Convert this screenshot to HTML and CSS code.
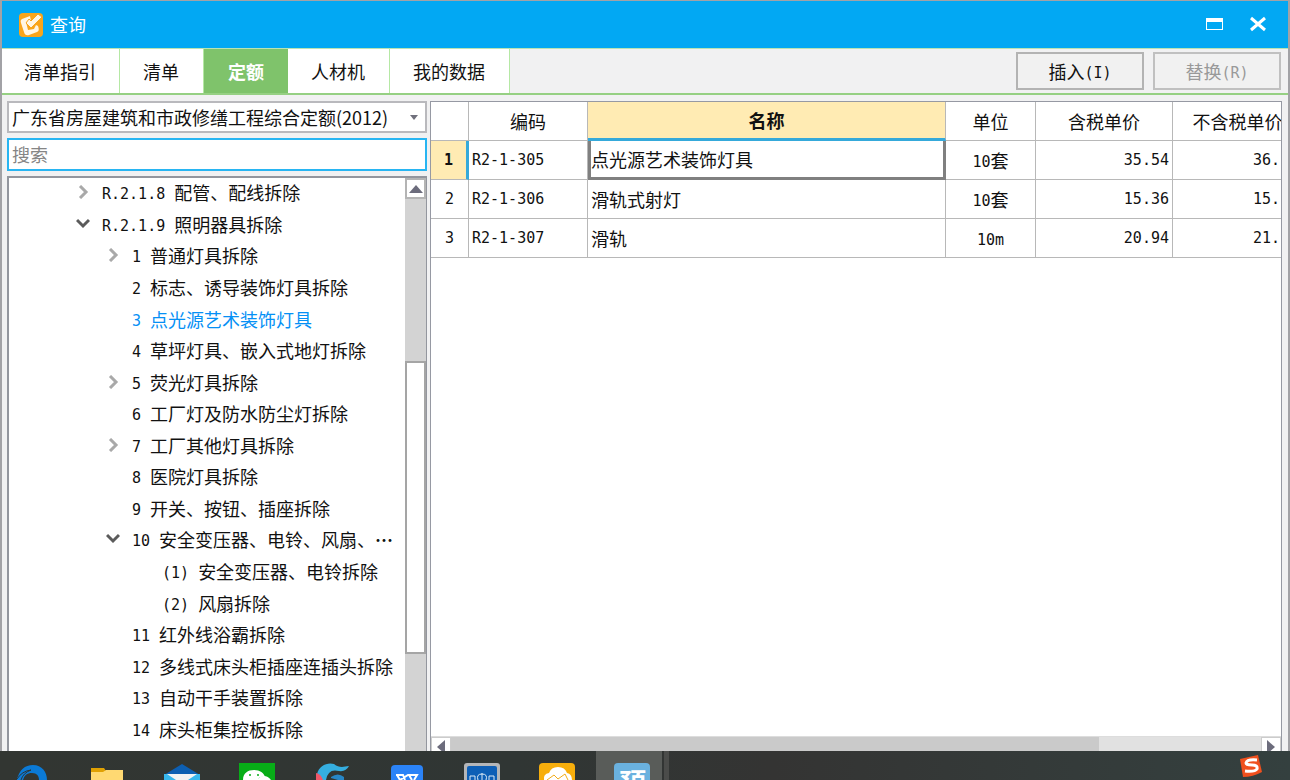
FILE: index.html
```html
<!DOCTYPE html>
<html lang="zh-CN">
<head>
<meta charset="utf-8">
<title>查询</title>
<link rel="stylesheet" href="styles.css">
</head>
<body>
<main class="window">
  <header class="titlebar">
    <svg class="app-icon" viewBox="0 0 24 24" aria-hidden="true">
      <rect width="24" height="24" rx="4" fill="#f9a51b"/>
      <path d="M11 3L3 6Q1 7 2 10L5 19Q6 23 10 22L18 19Q21 18 19 13L17 12L15 16L9 17L7 9L12 8Z" fill="#fff6e4"/>
      <path d="M7 10L12 15L23 4L19 1L12 8L10 6Z" fill="#fff6e4" stroke="#f9a51b" stroke-width="1"/>
    </svg>
    <h1 class="title">查询</h1>
    <button class="win-btn" type="button" aria-label="最大化"><svg width="18" height="18" viewBox="0 0 18 18"><path d="M1 2h17v12H1zM2 6v7h15V6z" fill="#fff" fill-rule="evenodd"/></svg></button>
    <button class="win-btn" type="button" aria-label="关闭"><svg width="18" height="18" viewBox="0 0 18 18"><path d="M2 2L16 14M16 2L2 14" stroke="#fff" stroke-width="3"/></svg></button>
  </header>

  <div class="toolbar">
    <nav class="tabs">
      <button class="tab" type="button">清单指引</button>
      <button class="tab" type="button">清单</button>
      <button class="tab tab-active" type="button">定额</button>
      <button class="tab" type="button">人材机</button>
      <button class="tab" type="button">我的数据</button>
    </nav>
    <div class="actions">
      <button class="action" type="button"><span>插入<span class="mono">(I)</span></span></button>
      <button class="action" type="button" disabled><span>替换<span class="mono">(R)</span></span></button>
    </div>
  </div>

  <div class="content">
    <section class="side">
      <select class="library" aria-label="定额库"><option>广东省房屋建筑和市政修缮工程综合定额(2012)</option></select>
      <input class="search" type="text" placeholder="搜索" aria-label="搜索">
      <div class="tree-panel">
        <ul class="tree">
          <li class="node level-1"><svg class="chevron" viewBox="0 0 14 14"><path d="M4 1L10 7L4 13"/></svg><span><span class="mono">R.2.1.8 </span>配管、配线拆除</span></li>
          <li class="node level-1"><svg class="chevron open" viewBox="0 0 14 14"><path d="M1 3L7 9L13 3"/></svg><span><span class="mono">R.2.1.9 </span>照明器具拆除</span></li>
          <li class="node level-2"><svg class="chevron" viewBox="0 0 14 14"><path d="M4 1L10 7L4 13"/></svg><span><span class="mono">1 </span>普通灯具拆除</span></li>
          <li class="node level-2 leaf"><span><span class="mono">2 </span>标志、诱导装饰灯具拆除</span></li>
          <li class="node level-2 leaf current"><span><span class="mono">3 </span>点光源艺术装饰灯具</span></li>
          <li class="node level-2 leaf"><span><span class="mono">4 </span>草坪灯具、嵌入式地灯拆除</span></li>
          <li class="node level-2"><svg class="chevron" viewBox="0 0 14 14"><path d="M4 1L10 7L4 13"/></svg><span><span class="mono">5 </span>荧光灯具拆除</span></li>
          <li class="node level-2 leaf"><span><span class="mono">6 </span>工厂灯及防水防尘灯拆除</span></li>
          <li class="node level-2"><svg class="chevron" viewBox="0 0 14 14"><path d="M4 1L10 7L4 13"/></svg><span><span class="mono">7 </span>工厂其他灯具拆除</span></li>
          <li class="node level-2 leaf"><span><span class="mono">8 </span>医院灯具拆除</span></li>
          <li class="node level-2 leaf"><span><span class="mono">9 </span>开关、按钮、插座拆除</span></li>
          <li class="node level-2"><svg class="chevron open" viewBox="0 0 14 14"><path d="M1 3L7 9L13 3"/></svg><span><span class="mono">10 </span>安全变压器、电铃、风扇、<b>⋯</b></span></li>
          <li class="node level-3 leaf"><span><span class="mono">(1) </span>安全变压器、电铃拆除</span></li>
          <li class="node level-3 leaf"><span><span class="mono">(2) </span>风扇拆除</span></li>
          <li class="node level-2 leaf"><span><span class="mono">11 </span>红外线浴霸拆除</span></li>
          <li class="node level-2 leaf"><span><span class="mono">12 </span>多线式床头柜插座连插头拆除</span></li>
          <li class="node level-2 leaf"><span><span class="mono">13 </span>自动干手装置拆除</span></li>
          <li class="node level-2 leaf"><span><span class="mono">14 </span>床头柜集控板拆除</span></li>
        </ul>
        <div class="vscroll">
          <button class="vscroll-up" type="button" aria-label="向上滚动"><svg width="14" height="8" viewBox="0 0 14 8"><path d="M0 8L7 0L14 8z" fill="#6c6c7c"/></svg></button>
          <div class="vscroll-track"><div class="vscroll-thumb"></div></div>
        </div>
      </div>
    </section>

    <section class="grid-panel">
      <div class="grid-view">
        <table class="grid">
          <colgroup><col class="c-index"><col class="c-code"><col><col class="c-unit"><col class="c-price"><col class="c-net"></colgroup>
          <thead>
            <tr><th></th><th>编码</th><th class="head-active">名称</th><th>单位</th><th>含税单价</th><th>不含税单价</th></tr>
          </thead>
          <tbody>
            <tr><td class="index index-active">1</td><td class="code">R2-1-305</td><td class="cell-active">点光源艺术装饰灯具</td><td class="unit"><span class="mono">10</span>套</td><td class="num">35.54</td><td class="num net">36.</td></tr>
            <tr><td class="index">2</td><td class="code">R2-1-306</td><td>滑轨式射灯</td><td class="unit"><span class="mono">10</span>套</td><td class="num">15.36</td><td class="num net">15.</td></tr>
            <tr><td class="index">3</td><td class="code">R2-1-307</td><td>滑轨</td><td class="unit"><span class="mono">10m</span></td><td class="num">20.94</td><td class="num net">21.</td></tr>
          </tbody>
        </table>
      </div>
      <div class="hscroll">
        <button class="hscroll-btn" type="button" aria-label="向左滚动"><svg width="8" height="14" viewBox="0 0 8 14"><path d="M8 0L0 7L8 14z" fill="#6c6c7c"/></svg></button>
        <div class="hscroll-track"><div class="hscroll-thumb"></div></div>
        <button class="hscroll-btn" type="button" aria-label="向右滚动"><svg width="8" height="14" viewBox="0 0 8 14"><path d="M0 0L8 7L0 14z" fill="#6c6c7c"/></svg></button>
      </div>
    </section>
  </div>
</main>

<footer class="taskbar">
  <div class="task"><svg viewBox="0 0 36 17"><path d="M3 17C5 7 11 2 19 2C28 2 33 9 33 17H25C25 13 23 10 18 10C13 10 10 12 8 17Z" fill="#0b7ad6"/><path d="M3 15Q11 7 18 8Q11 10 9 17H3Z" fill="#0b7ad6"/><path d="M3 16Q8 8 17 7Q9 10 7 17" fill="none" stroke="#2f3532" stroke-width="1"/></svg></div>
  <div class="task"><svg viewBox="0 0 36 17"><path d="M2 5h13l2 3-2 2H2z" fill="#e0a103"/><path d="M2 9h12l3-2h17v10H2z" fill="#ffd972"/></svg></div>
  <div class="task"><svg viewBox="0 0 36 17"><path d="M0 12L18 1L36 12z" fill="#0d5fb2"/><path d="M0 11h36v6H0z" fill="#37b7ed"/><path d="M3 11h30l-9 6H12z" fill="#f3f3f3"/></svg></div>
  <div class="task"><svg viewBox="0 0 36 17"><path d="M0 0h36v17H0z" fill="#07ad17"/><path d="M4 17C4 10 9 7 15 7S25 10 26 14Q20 13 19 17z" fill="#fff"/><path d="M18 17q3-4 7-4t7 4z" fill="#fff"/><circle cx="11" cy="12" r="1" fill="#07ad17"/><circle cx="19" cy="12" r="1" fill="#07ad17"/></svg></div>
  <div class="task"><svg viewBox="0 0 36 17"><path d="M3 11C5 3 13-1 20 1C25 5 29 4 35 3Q32 9 25 8Q14 5 12 17H8Z" fill="#35aee0"/><path d="M2 10Q7 11 9 17H2Z" fill="#ef5768"/><path d="M17 14Q24 9 30 14V17H24L17 15Z" fill="#2786c6"/></svg></div>
  <div class="task"><svg viewBox="0 0 36 17"><path d="M2 17V6q0-4 4-4h24q4 0 4 4v11z" fill="#2b83f7"/><path d="M7 12h7l2 5M8 12l3 5 8-5h9l-3 5M20 12l3 5" fill="none" stroke="#fff" stroke-width="2"/></svg></div>
  <div class="task"><svg viewBox="0 0 36 17"><path d="M0 17V3q0-3 3-3h30q3 0 3 3v14z" fill="#b4b6b8"/><path d="M3 17V5q0-2 2-2h26q2 0 2 2v12z" fill="#0d5fb6"/><path d="M6 17v-4h5v4M14 17q-2-6 4-6t4 6M18 10v7M25 17v-4h5v4" fill="none" stroke="#dceaf5" stroke-width="1"/></svg></div>
  <div class="task"><svg viewBox="0 0 36 17"><path d="M0 17V4q0-4 4-4h28q4 0 4 4v13z" fill="#f7ae0c"/><path d="M5 17q-1-6 5-7q2-6 9-6t9 6q5 1 5 7z" fill="#fff"/><path d="M8 17l7-5 4 4 7-5 3 6" fill="none" stroke="#f2ac18" stroke-width="1"/></svg></div>
  <div class="task task-active"><svg viewBox="0 0 36 17"><path d="M0 17V4q0-4 4-4h28q4 0 4 4v13z" fill="#6ab1df"/><text class="glyph" x="5" y="30">预</text></svg></div>
  <div class="task-stack"></div>
  <svg class="ime" viewBox="0 0 24 24" aria-label="S"><path d="M1 5L19 1L23 18Q14 23 4 23Z" fill="#f0501e"/><path d="M18 6Q8 5 7 9Q7 11 13 11Q19 11 18 15Q16 18 6 17" fill="none" stroke="#fff" stroke-width="3"/></svg>
</footer>
</body>
</html>
```
FILE: styles.css
```css
* { box-sizing: border-box; }

body {
  display: flex;
  flex-direction: column;
  height: 100vh;
  margin: 0;
  overflow: hidden;
  color: #111;
  font: 18px/24px "Noto Sans CJK SC", sans-serif;
}

button, input, select { font: inherit; color: inherit; }
button { display: flex; align-items: center; justify-content: center; padding: 0; border: 0; border-radius: 0; }
.mono { font-family: "DejaVu Sans Mono", monospace; font-size: 15px; line-height: 18px; vertical-align: 1px; white-space: pre; }

.window {
  display: flex;
  flex: 1;
  flex-direction: column;
  min-height: 0;
  border: 2px solid #a2a2a6;
  border-top-width: 1px;
  border-bottom: 0;
  background: #f1f1f2;
}

/* Title bar */
.titlebar { display: flex; align-items: center; height: 47px; padding: 0 13px 0 17px; background: #02a8f3; color: #fff; }
.app-icon { width: 24px; height: 24px; margin-right: 7px; }
.title { flex: 1; margin: 0; padding-bottom: 2px; font-size: 18px; font-weight: 400; }
.win-btn { width: 34px; height: 34px; margin-left: 10px; background: none; }

/* Tabs and actions */
.toolbar { display: flex; justify-content: space-between; height: 47px; border-top: 1px solid #b9e3b4; border-bottom: 2px solid #96d083; }
.tabs { display: flex; }
.tab { padding: 0 24px 0 23px; border-right: 1px solid #b5e8a4; background: #fff; }
.tab:first-child { padding: 0 23px 0 22px; }
.tab-active { padding: 0 24px; border-right: 0; background: #7fc36b; color: #fff; font-weight: 700; }
.actions { display: flex; gap: 9px; padding: 3px 7px; }
.action { width: 128px; height: 38px; border: 2px solid #b3b3b3; background: #f1f1f1; }
.action:disabled { border-color: #c0c0c0; color: #999; }

/* Two panes */
.content { display: flex; flex: 1; gap: 3px; min-height: 0; padding: 6px 6px 0 5px; }
.side { display: flex; flex-direction: column; flex: 0 0 420px; gap: 5px; min-height: 0; }
.library {
  height: 32px;
  padding: 0 24px 0 3px;
  border: 2px solid #b9b9bd;
  border-radius: 0;
  appearance: none;
  background: #fff url("data:image/svg+xml,%3Csvg xmlns='http://www.w3.org/2000/svg' width='8' height='5'%3E%3Cpath d='M0 0h8L4 5z' fill='%2370707c'/%3E%3C/svg%3E") no-repeat right 7px center;
}
.search { height: 33px; padding: 0 3px 2px; border: 2px solid #28b5f2; border-radius: 0; background: #fff; }
.search::placeholder { color: #858585; opacity: 1; }

/* Tree */
.tree-panel { display: flex; flex: 1; min-height: 0; border: 2px solid #93969e; border-right-width: 1px; border-bottom: 0; background: #fff; }
.tree { display: flex; flex: 1; flex-direction: column; margin: 0; padding: 0 0 5px; list-style: none; white-space: nowrap; }
.node { display: flex; flex: 1; align-items: center; gap: 12px; padding-bottom: 3px; }
.level-1 { padding-left: 67px; }
.level-2 { padding-left: 97px; }
.level-2.leaf { padding-left: 123px; }
.level-3.leaf { padding-left: 153px; }
.current { color: #0590f5; }
.chevron { width: 14px; height: 14px; fill: none; stroke: #a9a9a9; stroke-width: 3; }
.chevron.open { stroke: #5b5b5b; }

.vscroll { display: flex; flex-direction: column; width: 21px; background: #d3d3d3; }
.vscroll-up { height: 21px; border: 2px solid #b4b4b4; background: #fff; }
.vscroll-track { flex: 1; padding-top: 162px; }
.vscroll-thumb { height: 293px; border: 2px solid #a5a5a5; background: #fff; }

/* Grid */
.grid-panel { display: flex; flex: 1; flex-direction: column; min-width: 0; border: 1px solid #9699a3; border-bottom: 0; background: #fff; }
.grid-view { flex: 1; min-height: 0; overflow: hidden; }
.grid { width: calc(100% + 22px); table-layout: fixed; border-spacing: 0; }
.c-index { width: 38px; }
.c-code { width: 119px; }
.c-unit { width: 90px; }
.c-price { width: 137px; }
.c-net { width: 130px; }
.grid th, .grid td { height: 39px; padding: 0 3px; border: solid #b8b8b8; border-width: 0 1px 1px 0; }
.grid th { font-weight: 400; }
.grid .head-active { border-bottom: 3px solid #35a9da; background: #ffebb3; font-weight: 700; }
.grid .index, .grid .num, .grid .code { font-family: "DejaVu Sans Mono", monospace; font-size: 15px; }
.grid .index, .grid .unit { text-align: center; }
.grid .index-active { border-right: 3px solid #35a9da; background: #ffebb3; font-weight: 700; }
.grid .cell-active { padding-left: 0; border: 3px solid #808080; border-top: 0; }
.grid .num { text-align: right; }
.grid .net { padding-right: 22px; }

.hscroll { display: flex; height: 15px; overflow: hidden; border-top: 1px solid #ddd; background: #e1e1e1; }
.hscroll-btn { width: 20px; height: 20px; border: 1px solid #ccc; background: #fff; }
.hscroll-track { flex: 1; }
.hscroll-thumb { width: 80%; height: 20px; background: #cacaca; }

/* Taskbar */
.taskbar { display: flex; flex: 0 0 29px; overflow: hidden; background: linear-gradient(90deg, #323632, #303634 40%, #343433 60%, #34403f); }
.task { flex: 0 0 75px; padding: 12px 0 0 14px; }
.task svg { display: block; width: 36px; height: 17px; }
.task-active { flex-basis: 66px; margin-left: -4px; padding-left: 18px; background: #595c59; }
.task-stack { width: 5px; margin-left: 2px; background: #4b4c4a; }
.glyph { fill: #fff; font-size: 27px; font-weight: 700; }
.ime { width: 24px; height: 24px; margin: 3px 27px 0 auto; }
```
